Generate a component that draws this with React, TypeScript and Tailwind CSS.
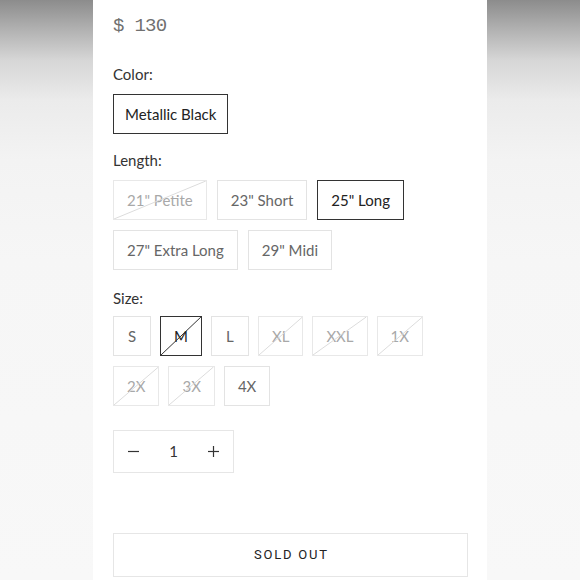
import React from "react";

type Opt = { label: string; state: "disabled" | "enabled" | "selected"; struck?: boolean };

const lengths: Opt[] = [
  { label: '21" Petite', state: "disabled", struck: true },
  { label: '23" Short', state: "enabled" },
  { label: '25" Long', state: "selected" },
  { label: '27" Extra Long', state: "enabled" },
  { label: '29" Midi', state: "enabled" },
];

const sizes: Opt[] = [
  { label: "S", state: "enabled" },
  { label: "M", state: "selected", struck: true },
  { label: "L", state: "enabled" },
  { label: "XL", state: "disabled", struck: true },
  { label: "XXL", state: "disabled", struck: true },
  { label: "1X", state: "disabled", struck: true },
  { label: "2X", state: "disabled", struck: true },
  { label: "3X", state: "disabled", struck: true },
  { label: "4X", state: "enabled" },
];

function Strike({ dark }: { dark: boolean }) {
  return (
    <svg
      className="absolute inset-0 w-full h-full pointer-events-none"
      viewBox="0 0 100 100"
      preserveAspectRatio="none"
    >
      <line
        x1="0"
        y1="100"
        x2="100"
        y2="0"
        stroke={dark ? "#333333" : "#dcdcdc"}
        strokeWidth="1"
        vectorEffect="non-scaling-stroke"
      />
    </svg>
  );
}

function OptionBox({ o }: { o: Opt }) {
  const cls =
    o.state === "selected"
      ? "border-[#333333] text-[#222222]"
      : o.state === "disabled"
      ? "border-[#e8e8e8] text-[#a8a8a8]"
      : "border-[#e3e3e3] text-[#666666]";
  return (
    <div
      className={`relative h-[40px] min-w-[38px] px-[13px] border flex items-center justify-center text-[15px] leading-none whitespace-nowrap ${cls}`}
    >
      <span>{o.label}</span>
      {o.struck && <Strike dark={o.state === "selected"} />}
    </div>
  );
}

export default function App() {
  return (
    <div
      className="w-[580px] h-[580px] overflow-hidden flex bg-[linear-gradient(to_bottom,#8c8c8c_0px,#b2b2b2_30px,#d6d6d6_60px,#ebebeb_100px,#f3f3f3_160px,#f6f6f6_260px,#f8f8f8_100%)]"
      style={{ fontFamily: "Lato, 'Noto Sans', sans-serif" }}
    >
      <div className="ml-[93px] w-[394px] h-full bg-white pl-[20px] pr-[19px] pt-[14px] flex flex-col">
        <div
          className="text-[19px] leading-[24px] text-[#707070] tracking-[-0.7px]"
          style={{ fontFamily: "'Liberation Mono', 'DejaVu Sans Mono', monospace" }}
        >
          $ 130
        </div>

        <div className="mt-[25px] text-[15px] leading-[22px] text-[#333333]">Color:</div>
        <div className="mt-[9px] flex">
          <div className="h-[40px] px-[11px] border border-[#333333] flex items-center text-[15px] text-[#222222] whitespace-nowrap">
            Metallic Black
          </div>
        </div>

        <div className="mt-[15px] text-[15px] leading-[22px] text-[#333333]">Length:</div>
        <div className="mt-[9px] flex flex-wrap gap-[10px]">
          {lengths.map((o) => (
            <OptionBox key={o.label} o={o} />
          ))}
        </div>

        <div className="mt-[17px] text-[15px] leading-[22px] text-[#333333]">Size:</div>
        <div className="mt-[7px] flex flex-wrap gap-x-[9px] gap-y-[10px] w-[320px]">
          {sizes.map((o) => (
            <OptionBox key={o.label} o={o} />
          ))}
        </div>

        <div className="mt-[24px] flex">
          <div className="w-[121px] h-[43px] border border-[#e6e6e6] grid grid-cols-3 items-center text-[#333333]">
            <div className="flex justify-center">
              <svg width="11" height="11" viewBox="0 0 11 11">
                <line x1="0" y1="5.5" x2="11" y2="5.5" stroke="#333" strokeWidth="1.2" />
              </svg>
            </div>
            <div className="flex justify-center text-[15px] leading-none">1</div>
            <div className="flex justify-center">
              <svg width="11" height="11" viewBox="0 0 11 11">
                <line x1="0" y1="5.5" x2="11" y2="5.5" stroke="#333" strokeWidth="1.2" />
                <line x1="5.5" y1="0" x2="5.5" y2="11" stroke="#333" strokeWidth="1.2" />
              </svg>
            </div>
          </div>
        </div>

        <div
          className="mt-[60px] h-[44px] w-full border border-[#e6e6e6] flex items-center justify-center text-[13px] tracking-[1.8px] text-[#222222] uppercase"
          style={{ fontFamily: "Roboto, 'Liberation Sans', sans-serif" }}
        >
          <span className="pl-[1.8px]">Sold out</span>
        </div>
      </div>
    </div>
  );
}
